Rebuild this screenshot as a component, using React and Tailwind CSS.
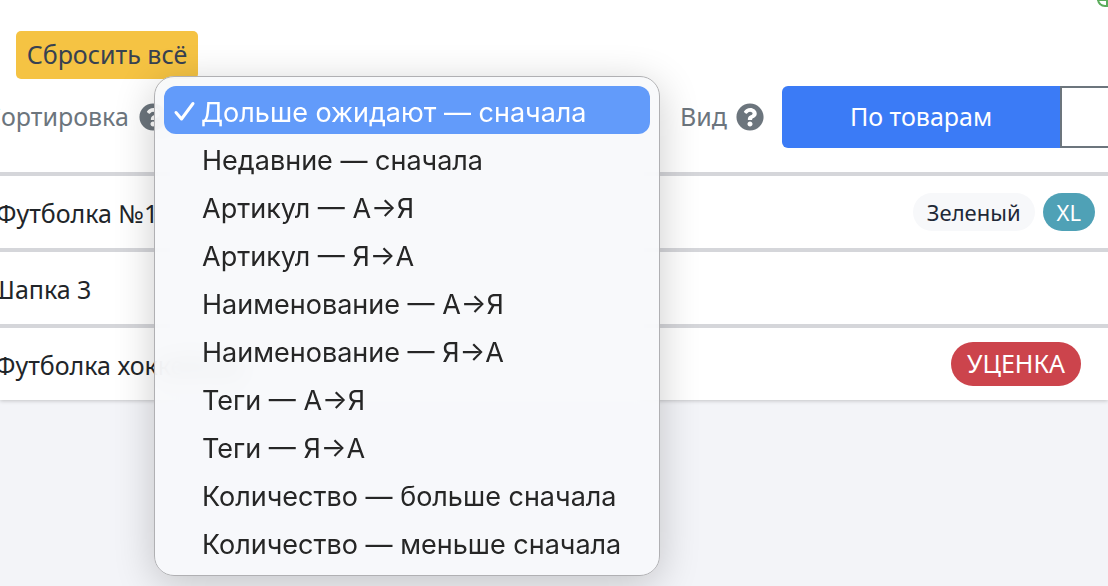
import { FaQuestionCircle } from "react-icons/fa";

const sortOptions = [
  "Недавние — сначала",
  "Артикул — А→Я",
  "Артикул — Я→А",
  "Наименование — А→Я",
  "Наименование — Я→А",
  "Теги — А→Я",
  "Теги — Я→А",
  "Количество — больше сначала",
  "Количество — меньше сначала",
];

const SortMenu = () => (
  <div className="absolute left-[154px] top-[76px] w-[506px] h-[500px] px-[9px] py-[9px] rounded-[20px] border border-[#b0b0b3] bg-[#f7f8fb]/90 backdrop-blur-md shadow-[0_8px_40px_rgba(0,0,0,0.2)] font-['Inter',sans-serif] text-[27px] text-[#262626]">
    <div className="flex items-center h-[48px] pt-[6px] rounded-[12px] bg-[#629bfa] text-white">
      <svg className="w-[37px] h-[22px] -mt-[4px] shrink-0" viewBox="0 0 37 22" fill="none">
        <path d="M12 12.5l5.5 6.5L29 3.5" stroke="white" strokeWidth="3" strokeLinecap="round" strokeLinejoin="round" />
      </svg>
      <span>Дольше ожидают — сначала</span>
    </div>
    {sortOptions.map((option) => (
      <div key={option} className="flex items-center h-[48px] pt-[6px] pl-[38px]">
        {option}
      </div>
    ))}
  </div>
);

const App = () => {
  return (
    <div className="relative h-[586px] overflow-hidden bg-[#f3f4f8] font-['Noto_Sans',sans-serif] text-[25px] text-[#212529]">
      <div className="h-[400px] bg-white shadow-[0_1px_4px_rgba(0,0,0,0.2)]">
        <div className="flex justify-end h-[31px]">
          <div className="w-[11px] h-[8px] -mt-px border-2 border-[#5cac5c] rounded-bl-[8px]" />
        </div>
        <button className="block ml-[16px] h-[48px] w-[182px] rounded-[5px] bg-[#f5c343] text-[#374151] text-[25px]">
          Сбросить всё
        </button>

        {/* Toolbar */}
        <div className="flex items-center h-[62px] mt-[7px] mb-[24px] -ml-[15px] text-[#6c757d]">
          <span>Сортировка</span>
          <FaQuestionCircle className="ml-[10px] text-[28px]" />
          <span className="ml-auto">Вид</span>
          <FaQuestionCircle className="ml-[9px] mr-[18px] text-[28px]" />
          <div className="flex h-[62px] w-[326px]">
            <div className="flex items-center justify-center w-[278px] rounded-l-[6px] bg-[#3b7bf6] text-white">
              По товарам
            </div>
            <div className="flex-1 border-2 border-r-0 border-[#6c757d] bg-white" />
          </div>
        </div>

        {/* Rows */}
        <div className="flex items-center justify-between h-[76px] pt-[4px] border-t-4 border-[#d5d6da] pr-[13px]">
          <span className="-ml-[4px]">Футболка №1</span>
          <div className="flex items-center gap-[8px] -mt-[4px] text-[22px]">
            <span className="flex items-center h-[38px] px-[14px] rounded-full bg-[#f7f8fa] text-[#1f2937]">Зеленый</span>
            <span className="flex items-center h-[38px] px-[14px] rounded-full bg-[#4fa1b6] text-white">XL</span>
          </div>
        </div>
        <div className="flex items-center h-[76px] pt-[4px] border-t-4 border-[#d5d6da]">
          <span className="-ml-[11px]">Шапка 3</span>
        </div>
        <div className="flex items-center justify-between h-[76px] pt-[4px] border-t-4 border-[#d5d6da] pr-[27px]">
          <span className="-ml-[5px]">Футболка хоккейная</span>
          <span className="flex items-center h-[44px] -mt-[4px] px-[16px] rounded-full bg-[#cc444c] text-white">УЦЕНКА</span>
        </div>
      </div>

      <SortMenu />
    </div>
  );
};

export default App;
